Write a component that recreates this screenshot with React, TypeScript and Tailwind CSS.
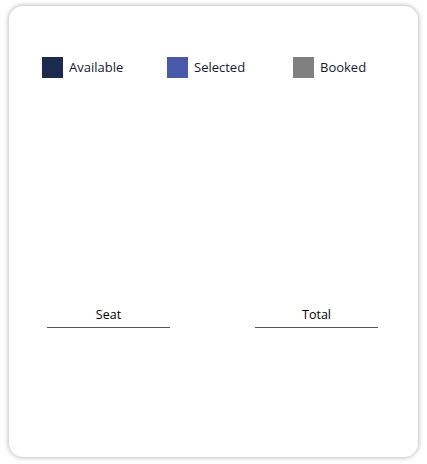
const legend = [
  { label: "Available", color: "bg-[#1b2a4e]" },
  { label: "Selected", color: "bg-[#4759a8]" },
  { label: "Booked", color: "bg-[#808080]" },
];

const summary = ["Seat", "Total"];

export default function App() {
  return (
    <div className="w-[427px] h-[464px] bg-white pt-[6px] pl-[9px] font-['Open_Sans',sans-serif]">
      <div className="w-[409px] h-[451px] rounded-[14px] bg-white shadow-[0_0_4px_1px_rgba(0,0,0,0.25)] flex flex-col">
        <div className="grid grid-cols-[125px_126px_125px] pl-[33px] pt-[51px]">
          {legend.map((item) => (
            <div key={item.label} className="flex items-center gap-[6px]">
              <div className={`w-[21px] h-[21px] ${item.color}`} />
              <span className="text-[13px] text-[#141933] leading-[21px]">{item.label}</span>
            </div>
          ))}
        </div>

        <div className="flex justify-between pl-[38px] pr-[40px] mt-[228px]">
          {summary.map((label) => (
            <div key={label} className="w-[123px] flex flex-col items-center">
              <span className="text-[12.5px] font-medium text-black leading-[18px]">{label}</span>
              <div className="w-full h-px bg-[#555] mt-[3px]" />
            </div>
          ))}
        </div>
      </div>
    </div>
  );
}
